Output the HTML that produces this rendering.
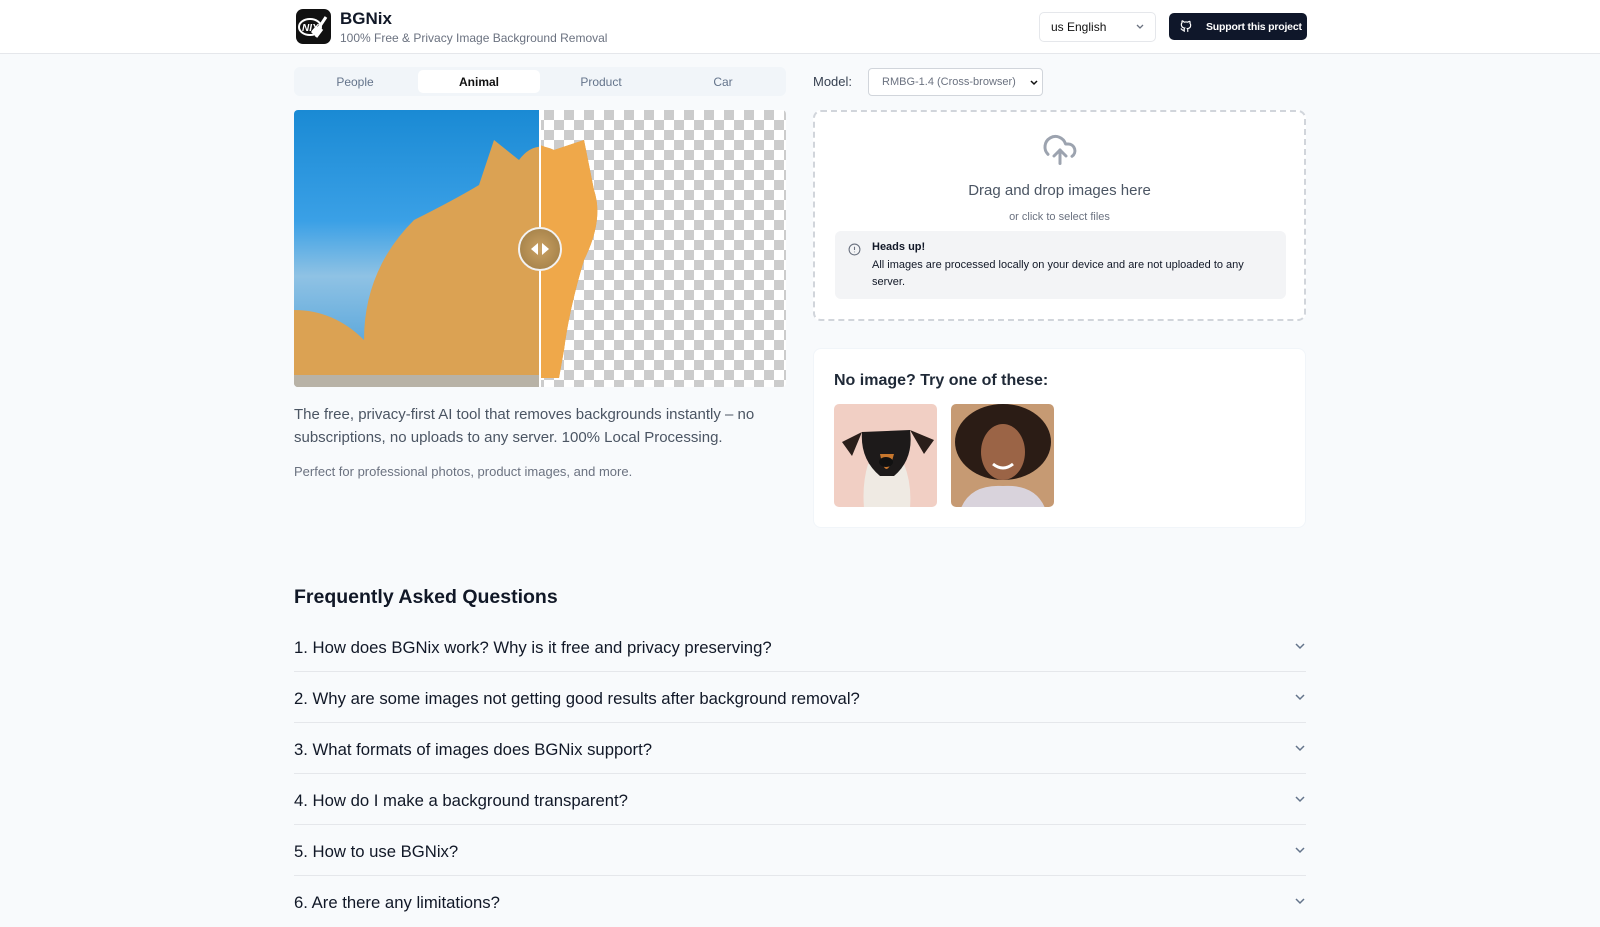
<!DOCTYPE html>
<html><head><meta charset="utf-8"><style>
*{box-sizing:border-box;margin:0;padding:0}
body{width:1600px;height:900px;overflow:hidden;background:#f8fafc;font-family:"Liberation Sans",sans-serif;color:#111827;position:relative}
.abs{position:absolute}
header{position:absolute;left:0;top:0;width:1600px;height:54px;background:#fff;border-bottom:1px solid #e5e7eb}
.chk{background-color:#fff;background-image:linear-gradient(45deg,#ccc 25%,transparent 25%,transparent 75%,#ccc 75%),linear-gradient(45deg,#ccc 25%,transparent 25%,transparent 75%,#ccc 75%);background-size:20px 20px;background-position:0 0,10px 10px}
.q{position:absolute;left:294px;width:1012px;height:51px;border-bottom:1px solid #e5e7eb;font-size:16.7px;font-weight:500;color:#111827}
.q span{position:absolute;left:0;top:17px;white-space:nowrap}
.q svg{position:absolute;right:1px;top:22px}
</style></head><body>
<header>
 <div class="abs" style="left:296px;top:9px;width:35px;height:35px;background:#111;border-radius:7px;overflow:hidden">
  <svg width="35" height="35" viewBox="0 0 35 35"><ellipse cx="14" cy="18" rx="11" ry="8" fill="none" stroke="#fff" stroke-width="2"/><text x="6" y="22" font-size="10" font-weight="bold" fill="#fff" font-style="italic" font-family="Liberation Sans">NIX</text><path d="M18 26 L30 8 M20 28 l6 -8 M16 24 l6 -6" stroke="#fff" stroke-width="3"/></svg>
 </div>
 <div class="abs" style="left:340px;top:9px;font-size:17px;font-weight:bold;color:#111827">BGNix</div>
 <div class="abs" style="left:340px;top:31px;font-size:12px;color:#6b7280">100% Free &amp; Privacy Image Background Removal</div>
 <div class="abs" style="left:1039px;top:12px;width:117px;height:30px;border:1px solid #e5e7eb;border-radius:5px;font-size:12px;color:#111;padding:7px 11px">us English
  <svg class="abs" style="right:10px;top:10px" width="10" height="8" viewBox="0 0 10 8"><path d="M2 2l3 3 3-3" stroke="#6b7280" fill="none" stroke-width="1.3"/></svg></div>
 <div class="abs" style="left:1169px;top:13px;width:138px;height:27px;background:#0f172a;border-radius:5px;color:#fff;font-size:10.5px;font-weight:bold;padding:8px 0 0 37px;white-space:nowrap;letter-spacing:-0.2px">Support this project
  <svg class="abs" style="left:10px;top:6px" width="14" height="14" viewBox="0 0 24 24" fill="none" stroke="#fff" stroke-width="2"><path d="M9 19c-4 1.5-4-2-6-2.5M15 22v-3.5c0-1 .1-1.4-.5-2 2.8-.3 5.5-1.4 5.5-6a4.6 4.6 0 0 0-1.3-3.2 4.2 4.2 0 0 0-.1-3.2s-1.1-.3-3.5 1.3a12 12 0 0 0-6.2 0C6.5 2.8 5.4 3.1 5.4 3.1a4.2 4.2 0 0 0-.1 3.2A4.6 4.6 0 0 0 4 9.5c0 4.6 2.7 5.7 5.5 6-.6.6-.6 1.2-.5 2V22"/></svg></div>
</header>

<div class="abs" style="left:294px;top:67px;width:492px;height:29px;background:#f1f5f9;border-radius:6px;font-size:12px;color:#64748b">
 <div class="abs" style="left:0;width:122px;top:8px;text-align:center">People</div>
 <div class="abs" style="left:124px;top:3px;width:122px;height:23px;background:#fff;border-radius:5px;color:#111;font-weight:bold;text-align:center;padding-top:5px">Animal</div>
 <div class="abs" style="left:246px;width:122px;top:8px;text-align:center">Product</div>
 <div class="abs" style="left:368px;width:122px;top:8px;text-align:center">Car</div>
</div>
<div class="abs" style="left:813px;top:74px;font-size:13px;color:#374151">Model:</div>
<div class="abs" style="left:868px;top:68px;width:175px;height:28px;border:1px solid #d1d5db;border-radius:4px;background:#fff;font-size:11px;color:#6b7280;padding:7px 13px">RMBG-1.4 (Cross-browser)
 <svg class="abs" style="right:3px;top:10px" width="10" height="8" viewBox="0 0 10 8"><path d="M2 2l3 3 3-3" stroke="#111" fill="none" stroke-width="1.5"/></svg></div>

<div class="abs" style="left:294px;top:110px;width:492px;height:277px;border-radius:4px;overflow:hidden">
 <div class="abs chk" style="left:0;top:0;width:492px;height:277px"></div>
 <div class="abs" style="left:0;top:0;width:246px;height:277px;background:linear-gradient(180deg,#1a8ad4 0%,#3aa0e6 40%,#8fc2e4 60%,#5ca8dc 85%,#b9b3a5 95%)"></div>
 <svg class="abs" style="left:0;top:0" width="492" height="277" viewBox="0 0 492 277">
  <path d="M0 200 Q40 200 70 230 Q70 160 120 110 Q160 90 185 75 L200 30 L225 50 Q240 30 260 40 L290 30 L300 80 Q310 110 290 150 Q275 200 270 240 L265 268 L0 268Z" fill="#dba253"/>
  <path d="M246 35 L260 40 L290 30 L300 80 Q310 110 290 150 Q275 200 270 240 L265 268 L246 268Z" fill="#efa84a"/>
  <rect x="0" y="265" width="246" height="12" fill="#b8b2a6"/>
 </svg>
 <div class="abs" style="left:245px;top:0;width:2px;height:277px;background:#fff"></div>
 <div class="abs" style="left:224px;top:117px;width:44px;height:44px;border-radius:50%;border:2px solid #f2f2f2;background:radial-gradient(circle,#c9a062,#9d7b44)">
  <svg width="40" height="40" viewBox="0 0 40 40"><path d="M18 14v12l-7-6z M22 14v12l7-6z" fill="#fff"/></svg></div>
</div>
<div class="abs" style="left:294px;top:403px;width:500px;font-size:15px;line-height:23px;color:#4b5563">The free, privacy-first AI tool that removes backgrounds instantly – no subscriptions, no uploads to any server. 100% Local Processing.</div>
<div class="abs" style="left:294px;top:464px;font-size:13px;color:#6b7280">Perfect for professional photos, product images, and more.</div>

<div class="abs" style="left:813px;top:110px;width:493px;height:211px;border:2px dashed #d1d5db;border-radius:8px;background:#fff">
 <svg class="abs" style="left:227px;top:20px" width="36" height="36" viewBox="0 0 24 24" fill="none" stroke="#9ca3af" stroke-width="2" stroke-linecap="round" stroke-linejoin="round"><path d="M4 14.9A7 7 0 1 1 15.7 8h1.8a4.5 4.5 0 0 1 2.5 8.2"/><path d="M12 12v9"/><path d="m16 16-4-4-4 4"/></svg>
 <div class="abs" style="left:0;width:489px;top:70px;text-align:center;font-size:15px;color:#4b5563">Drag and drop images here</div>
 <div class="abs" style="left:0;width:489px;top:99px;text-align:center;font-size:11px;color:#6b7280">or click to select files</div>
 <div class="abs" style="left:20px;top:119px;width:451px;height:68px;background:#f3f4f6;border-radius:6px;font-size:11px;color:#111827">
  <svg class="abs" style="left:13px;top:12px" width="13" height="13" viewBox="0 0 24 24" fill="none" stroke="#6b7280" stroke-width="2"><circle cx="12" cy="12" r="10"/><path d="M12 7v6M12 16v1"/></svg>
  <div class="abs" style="left:37px;top:10px;font-weight:bold">Heads up!</div>
  <div class="abs" style="left:37px;top:26px;width:400px;line-height:17px">All images are processed locally on your device and are not uploaded to any server.</div>
 </div>
</div>

<div class="abs" style="left:813px;top:348px;width:493px;height:180px;background:#fff;border-radius:8px;border:1px solid #f1f5f9">
 <div class="abs" style="left:20px;top:23px;font-size:16px;font-weight:bold;color:#1f2937">No image? Try one of these:</div>
 <div class="abs" style="left:20px;top:55px;width:103px;height:103px;border-radius:5px;overflow:hidden;background:#f1cfc4">
  <svg width="104" height="104" viewBox="0 0 104 104"><path d="M30 104 Q28 80 34 60 L70 60 Q78 80 76 104Z" fill="#efeae3"/><path d="M28 28 L76 26 Q80 55 60 72 L46 72 Q26 55 28 28Z" fill="#1d1a1a"/><path d="M28 28 L8 38 L18 52Z M76 26 L100 36 L90 50Z" fill="#2a1e1a"/><path d="M46 50 Q52 80 60 50Z" fill="#c8772d"/><ellipse cx="52" cy="58" rx="7" ry="5" fill="#111"/></svg></div>
 <div class="abs" style="left:137px;top:55px;width:103px;height:103px;border-radius:5px;overflow:hidden;background:#c69a73">
  <svg width="104" height="104" viewBox="0 0 104 104"><ellipse cx="52" cy="38" rx="48" ry="38" fill="#2b1c15"/><ellipse cx="52" cy="48" rx="22" ry="28" fill="#9b6446"/><path d="M10 104 Q20 80 52 82 Q84 80 94 104Z" fill="#d9d3dc"/><path d="M42 60 Q52 68 62 60" stroke="#fff" stroke-width="3" fill="none"/></svg></div>
</div>

<div class="abs" style="left:294px;top:586px;font-size:19.5px;font-weight:bold;color:#111827">Frequently Asked Questions</div>
<div class="q" style="top:621px"><span>1. How does BGNix work? Why is it free and privacy preserving?</span><svg width="10" height="7" viewBox="0 0 10 7"><path d="M1 1l4 4 4-4" stroke="#64748b" fill="none" stroke-width="1.5"/></svg></div>
<div class="q" style="top:672px"><span>2. Why are some images not getting good results after background removal?</span><svg width="10" height="7" viewBox="0 0 10 7"><path d="M1 1l4 4 4-4" stroke="#64748b" fill="none" stroke-width="1.5"/></svg></div>
<div class="q" style="top:723px"><span>3. What formats of images does BGNix support?</span><svg width="10" height="7" viewBox="0 0 10 7"><path d="M1 1l4 4 4-4" stroke="#64748b" fill="none" stroke-width="1.5"/></svg></div>
<div class="q" style="top:774px"><span>4. How do I make a background transparent?</span><svg width="10" height="7" viewBox="0 0 10 7"><path d="M1 1l4 4 4-4" stroke="#64748b" fill="none" stroke-width="1.5"/></svg></div>
<div class="q" style="top:825px"><span>5. How to use BGNix?</span><svg width="10" height="7" viewBox="0 0 10 7"><path d="M1 1l4 4 4-4" stroke="#64748b" fill="none" stroke-width="1.5"/></svg></div>
<div class="q" style="top:876px;border:none"><span>6. Are there any limitations?</span><svg width="10" height="7" viewBox="0 0 10 7"><path d="M1 1l4 4 4-4" stroke="#64748b" fill="none" stroke-width="1.5"/></svg></div>
</body></html>
